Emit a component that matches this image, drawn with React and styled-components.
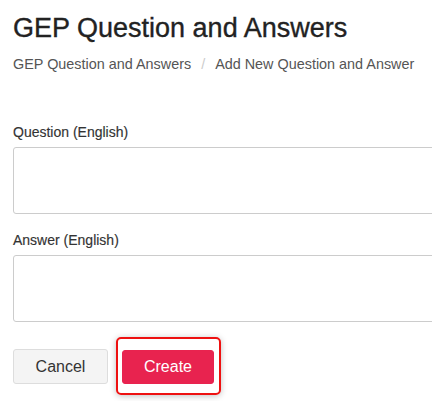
import React from "react";
import styled, { createGlobalStyle } from "styled-components";

const GlobalStyle = createGlobalStyle`
    html, body {
        margin: 0;
        padding: 0;
        background: #ffffff;
        font-family: "Liberation Sans", Arial, sans-serif;
    }
`;

const Page = styled.div`
    box-sizing: border-box;
    width: 100%;
    min-height: 100vh;
    overflow: hidden;
    padding: 10px 0 0 13px;
`;

const Title = styled.h1`
    margin: 0;
    font-size: 27px;
    line-height: 36px;
    font-weight: 400;
    color: #222222;
    -webkit-text-stroke: 0.35px #222222;
`;

const Breadcrumb = styled.nav`
    display: flex;
    align-items: center;
    gap: 10px;
    margin-top: 9px;
    font-size: 14.4px;
    line-height: 18px;
    color: #555555;
`;

const Separator = styled.span`
    color: #cccccc;
`;

const Form = styled.form`
    display: flex;
    flex-direction: column;
    width: 560px;
    margin-top: 50px;
`;

const Field = styled.div`
    display: flex;
    flex-direction: column;
    gap: 6px;
    margin-bottom: 17px;
`;

const Label = styled.label`
    font-size: 14px;
    line-height: 18px;
    color: #333333;
    -webkit-text-stroke: 0.15px #333333;
`;

const TextArea = styled.textarea`
    box-sizing: border-box;
    width: 100%;
    height: 67px;
    border: 1px solid #cccccc;
    border-radius: 3px;
    resize: none;
    font-family: inherit;
    font-size: 14px;
    padding: 6px 10px;
    outline: none;
`;

const Actions = styled.div`
    display: flex;
    align-items: center;
    gap: 14px;
    margin-top: 10px;
`;

const Button = styled.button`
    box-sizing: border-box;
    width: ${(p) => p.$width}px;
    height: ${(p) => (p.$primary ? 34 : 35)}px;
    padding: 0;
    border-radius: 3px;
    font-family: inherit;
    font-size: 16px;
    cursor: pointer;
    border: 1px solid ${(p) => (p.$primary ? "#e8234f" : "#dddddd")};
    background: ${(p) => (p.$primary ? "#e8234f" : "#f4f4f4")};
    color: ${(p) => (p.$primary ? "#ffffff" : "#333333")};
`;

const FocusWrap = styled.span`
    position: relative;
    display: inline-flex;
`;

const FocusRing = styled.span`
    position: absolute;
    left: -6px;
    right: -7px;
    top: -13px;
    bottom: -11px;
    border: 2px solid #ee1111;
    border-radius: 5px;
    box-shadow: 0 1px 6px rgba(0, 0, 0, 0.25);
    pointer-events: none;
`;

export default function App() {
    return (
        <>
            <GlobalStyle />
            <Page>
                <Title>GEP Question and Answers</Title>
                <Breadcrumb>
                    <span>GEP Question and Answers</span>
                    <Separator>/</Separator>
                    <span>Add New Question and Answer</span>
                </Breadcrumb>
                <Form onSubmit={(e) => e.preventDefault()}>
                    <Field>
                        <Label>Question (English)</Label>
                        <TextArea />
                    </Field>
                    <Field>
                        <Label>Answer (English)</Label>
                        <TextArea />
                    </Field>
                    <Actions>
                        <Button type="button" $width={95}>Cancel</Button>
                        <FocusWrap>
                            <Button type="submit" $primary $width={92}>Create</Button>
                            <FocusRing />
                        </FocusWrap>
                    </Actions>
                </Form>
            </Page>
        </>
    );
}
